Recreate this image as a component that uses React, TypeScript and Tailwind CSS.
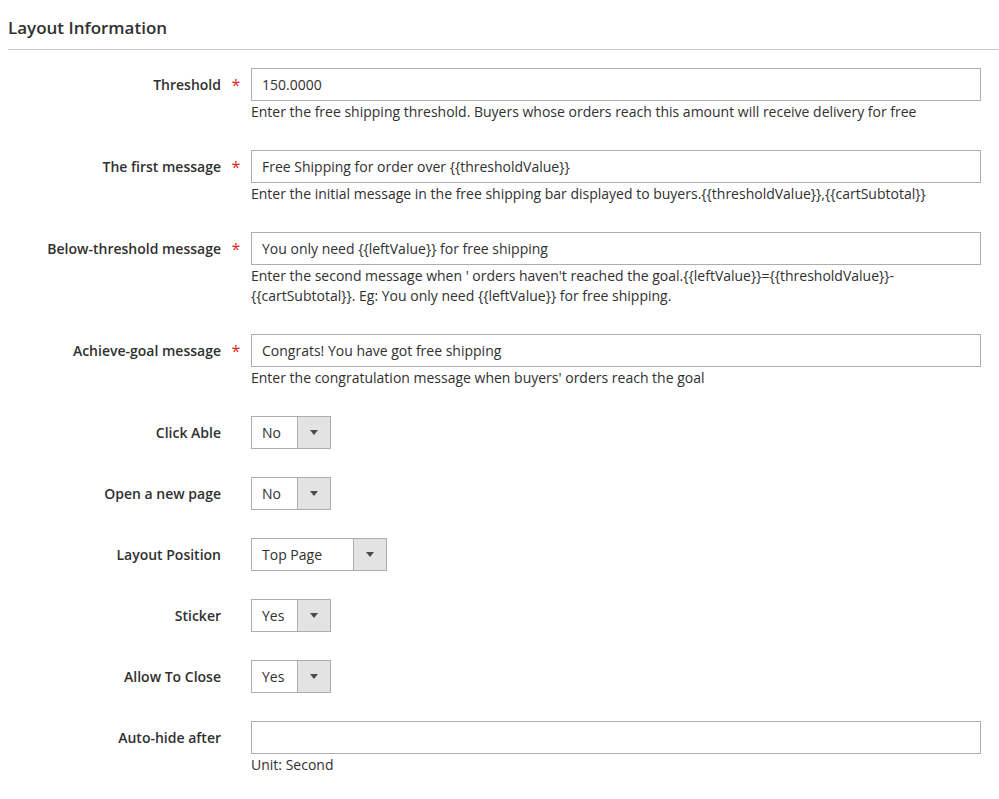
const F = { fontFamily: '"Open Sans", sans-serif' };

function Row({ label, req, children, note }: { label: string; req?: boolean; children: React.ReactNode; note?: React.ReactNode }) {
  return (
    <div className="flex mb-[28px]">
      <div className="w-[213px] h-[33px] flex items-center justify-end text-[14px] font-semibold text-[#303030]">{label}</div>
      <div className="w-[30px] h-[33px] flex items-center justify-center text-[#e22626] text-[16px]">{req ? "*" : ""}</div>
      <div className="flex-1 pr-[18px]">
        {children}
        {note && <div className="text-[14px] leading-[20px] text-[#303030] mt-[1px]">{note}</div>}
      </div>
    </div>
  );
}

function Input({ value }: { value: string }) {
  return (
    <div className="h-[33px] border border-[#adadad] bg-white px-[10px] flex items-center text-[14px] text-[#303030]">{value}</div>
  );
}

function Select({ value, w }: { value: string; w: number }) {
  return (
    <div className="h-[33px] border border-[#adadad] bg-white flex text-[14px] text-[#303030]" style={{ width: w }}>
      <div className="flex-1 px-[10px] flex items-center">{value}</div>
      <div className="w-[33px] border-l border-[#adadad] bg-[#e3e3e3] flex items-center justify-center">
        <div className="w-0 h-0 border-l-[4px] border-r-[4px] border-t-[5px] border-l-transparent border-r-transparent border-t-[#514943]" />
      </div>
    </div>
  );
}

export default function App() {
  return (
    <div className="w-[999px] h-[799px] bg-white pl-[8px]" style={F}>
      <div className="h-[50px] border-b border-[#cccccc] flex items-center pt-[6px] text-[17px] font-semibold text-[#303030]">Layout Information</div>
      <div className="pt-[18px] -ml-[8px] pl-[8px]">
        <Row label="Threshold" req note="Enter the free shipping threshold. Buyers whose orders reach this amount will receive delivery for free"><Input value="150.0000" /></Row>
        <Row label="The first message" req note="Enter the initial message in the free shipping bar displayed to buyers.{{thresholdValue}},{{cartSubtotal}}"><Input value="Free Shipping for order over {{thresholdValue}}" /></Row>
        <Row label="Below-threshold message" req note={<>Enter the second message when ' orders haven't reached the goal.{"{{leftValue}}={{thresholdValue}}-"}<br />{"{{cartSubtotal}}. Eg: You only need {{leftValue}} for free shipping."}</>}><Input value="You only need {{leftValue}} for free shipping" /></Row>
        <Row label="Achieve-goal message" req note="Enter the congratulation message when buyers' orders reach the goal"><Input value="Congrats! You have got free shipping" /></Row>
        <Row label="Click Able"><Select value="No" w={80} /></Row>
        <Row label="Open a new page"><Select value="No" w={80} /></Row>
        <Row label="Layout Position"><Select value="Top Page" w={136} /></Row>
        <Row label="Sticker"><Select value="Yes" w={80} /></Row>
        <Row label="Allow To Close"><Select value="Yes" w={80} /></Row>
        <Row label="Auto-hide after" note="Unit: Second"><Input value="" /></Row>
      </div>
    </div>
  );
}
